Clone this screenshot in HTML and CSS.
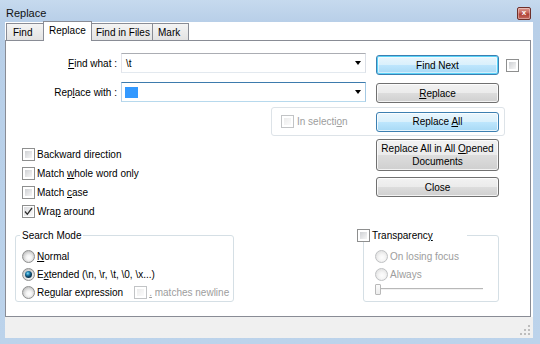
FILE: index.html
```html
<!DOCTYPE html>
<html>
<head>
<meta charset="utf-8">
<title>Replace</title>
<link rel="stylesheet" href="styles.css">
</head>
<body>
<div class="window">
  <div class="titlebar">
    <span class="title">Replace</span>
    <div class="close">x</div>
  </div>
  <div class="client">
    <div class="tabs">
      <div class="tab t-find">Find</div>
      <div class="tab active t-replace">Replace</div>
      <div class="tab t-files">Find in Files</div>
      <div class="tab t-mark">Mark</div>
    </div>
    <div class="panel">
      <div class="top">
        <div class="left">
          <div class="field">
            <label><u>F</u>ind what :</label>
            <div class="combo"><span class="val">\t</span><span class="arrow"></span></div>
          </div>
          <div class="field">
            <label>Rep<u>l</u>ace with :</label>
            <div class="combo focus"><span class="sel"></span><span class="arrow"></span></div>
          </div>
          <div class="checks">
            <div class="check"><span class="cb"></span><span>Backward direction</span></div>
            <div class="check"><span class="cb"></span><span>Match <u>w</u>hole word only</span></div>
            <div class="check"><span class="cb"></span><span>Match <u>c</u>ase</span></div>
            <div class="check"><span class="cb checked"><svg viewBox="0 0 9 9" width="9" height="9"><path d="M1 4.5 L3.3 7.3 L8 1" fill="none" stroke="#2b2b2b" stroke-width="1.3"/></svg></span><span>Wra<u>p</u> around</span></div>
          </div>
        </div>
        <div class="right">
          <div class="row1">
            <div class="btn blue default"><span>Find Next</span></div>
            <span class="cb small"></span>
          </div>
          <div class="btn b-replace"><span><u>R</u>eplace</span></div>
          <div class="insel">
            <div class="insel-label"><span class="cb disabled"></span><span class="dis">In selecti<u>o</u>n</span></div>
            <div class="btn blue"><span>Replace <u>A</u>ll</span></div>
          </div>
          <div class="btn tall"><span>Replace All in All <u>O</u>pened<br>Documents</span></div>
          <div class="btn b-close"><span>Close</span></div>
        </div>
      </div>
      <div class="bottom">
        <fieldset class="group search">
          <legend>Search Mode</legend>
          <div class="opt"><span class="rb"></span><span><u>N</u>ormal</span></div>
          <div class="opt"><span class="rb on"></span><span>E<u>x</u>tended (\n, \r, \t, \0, \x...)</span></div>
          <div class="opt clip"><span class="rb"></span><span>Re<u>g</u>ular expression</span><span class="cb disabled nl"></span><span class="dis"><u>.</u> matches newline</span></div>
        </fieldset>
        <fieldset class="group trans">
          <legend><span class="cb"></span><span>Transparenc<u>y</u></span></legend>
          <div class="opt"><span class="rb disabled"></span><span class="dis">On losing focus</span></div>
          <div class="opt"><span class="rb disabled"></span><span class="dis">Always</span></div>
          <div class="opt slider-row"><div class="slider"><span class="thumb"></span></div></div>
        </fieldset>
      </div>
    </div>
    <div class="footer">
      <svg class="grip" width="11" height="11" viewBox="0 0 11 11">
        <g fill="#bdbdbd">
          <rect x="8" y="0" width="2" height="2"/>
          <rect x="4" y="4" width="2" height="2"/><rect x="8" y="4" width="2" height="2"/>
          <rect x="0" y="8" width="2" height="2"/><rect x="4" y="8" width="2" height="2"/><rect x="8" y="8" width="2" height="2"/>
        </g>
      </svg>
    </div>
  </div>
</div>
</body>
</html>
```

FILE: styles.css
```css
* { box-sizing: border-box; }
html, body { margin: 0; padding: 0; }
body {
  width: 540px;
  height: 344px;
  overflow: hidden;
  font-family: "Liberation Sans", Arial, sans-serif;
  font-size: 10px;
  color: #000;
  background: #b9d1ea;
}
u { text-decoration: underline; text-underline-offset: 1px; }

.window {
  width: 540px;
  height: 344px;
  display: flex;
  flex-direction: column;
  background: linear-gradient(#c6daee, #b8cfe8 22px, #b9d1ea 60%, #bcd3eb);
}

.titlebar {
  height: 22px;
  display: flex;
  align-items: flex-start;
  justify-content: space-between;
  padding: 0 9px 0 6px;
}
.title {
  font-size: 11px;
  line-height: 13px;
  margin-top: 7px;
  color: #111;
}
.close {
  width: 14px;
  height: 13px;
  margin-top: 7px;
  border: 1px solid #6e2f2a;
  border-radius: 2px;
  background: linear-gradient(#dc9b92, #c5625a 45%, #ae3f35 55%, #c66a5f);
  box-shadow: inset 0 0 0 1px rgba(255,255,255,0.35);
  color: #fff;
  font-size: 8px;
  font-weight: bold;
  line-height: 10px;
  text-align: center;
}

.client {
  flex: 1;
  margin: 0 7px 6px 5px;
  background: #fff;
  display: flex;
  flex-direction: column;
}

.tabs {
  height: 18px;
  display: flex;
  align-items: flex-end;
  padding-left: 1px;
  position: relative;
  z-index: 1;
}
.tab {
  height: 17px;
  border: 1px solid #898c95;
  border-bottom: none;
  background: linear-gradient(#f4f4f4, #e3e3e3);
  padding-left: 5px;
  line-height: 17px;
  white-space: nowrap;
}
.tab.active {
  height: 20px;
  margin: 0 -1px -1px;
  background: #fff;
  padding-top: 0;
  line-height: 18px;
}
.t-find { width: 38px; padding-left: 6px; }
.t-replace { width: 49px; }
.t-files { width: 62px; padding-left: 4px; }
.t-mark { width: 37px; margin-left: -1px; }

.panel {
  height: 277px;
  margin-right: 2px;
  border: 1px solid #898c95;
  background: #fff;
  display: flex;
  flex-direction: column;
}

.top {
  display: flex;
  height: 180px;
}
.left {
  width: 360px;
  padding-top: 12px;
  display: flex;
  flex-direction: column;
}
.field {
  display: flex;
  align-items: center;
  height: 20px;
}
.field + .field { margin-top: 9px; }
.field label {
  width: 111px;
  margin-right: 4px;
  text-align: right;
  white-space: nowrap;
}
.combo {
  width: 245px;
  height: 20px;
  border: 1px solid;
  border-color: #abadb3 #dbdfe6 #e3e9ef #e2e3ea;
  display: flex;
  align-items: center;
  padding-left: 4px;
}
.combo.focus { border-color: #3d7bad #a4c9e3 #b7d9ed #b5cfe7; padding-left: 3px; }
.combo .arrow {
  margin-left: auto;
  margin-right: 4px;
  width: 0;
  height: 0;
  border-left: 3.5px solid transparent;
  border-right: 3.5px solid transparent;
  border-top: 4px solid #000;
}
.sel {
  width: 13px;
  height: 11px;
  background: #3399ff;
}

.checks {
  margin-top: 43px;
  padding-left: 16px;
}
.check {
  height: 19px;
  display: flex;
  align-items: center;
  gap: 2px;
  white-space: nowrap;
}

.cb {
  width: 13px;
  height: 13px;
  flex: none;
  display: inline-flex;
  align-items: center;
  justify-content: center;
  border: 1px solid #8e8f8f;
  padding: 2px;
  background: linear-gradient(135deg, #cfd1d4, #f6f6f6) content-box, #fff;
}
.cb.checked { padding: 1px; background: linear-gradient(135deg, #dcdde0, #fafafa) content-box, #fff; }
.cb.disabled {
  border-color: #c2c4c6;
  background: linear-gradient(135deg, #ececec, #fbfbfb) content-box, #fff;
}
.dis { color: #9d9d9d; }

.rb {
  width: 13px;
  height: 13px;
  flex: none;
  border-radius: 50%;
  border: 1px solid #8e8f8f;
  background: radial-gradient(circle at 55% 60%, #fdfdfd 0, #f4f4f4 2.5px, #d8d8d8 5px, #c9c9c9 6px);
  display: inline-flex;
  align-items: center;
  justify-content: center;
}
.rb.on::after {
  content: "";
  width: 7px;
  height: 7px;
  border-radius: 50%;
  background: radial-gradient(circle at 40% 35%, #8fe0f5 0, #2b8fbd 1.5px, #0f4f74 3px, #0b3550 4px);
}
.rb.disabled {
  border-color: #bfc1c3;
  background: radial-gradient(circle at 55% 60%, #fdfdfd 0, #f6f6f6 3px, #e6e6e6 6px);
}

.right {
  margin-left: 10px;
  padding-top: 14px;
  display: flex;
  flex-direction: column;
  width: 155px;
}
.btn {
  width: 123px;
  height: 20px;
  flex: none;
  border: 1px solid #707070;
  border-radius: 3px;
  background: linear-gradient(#f2f2f2, #ebebeb 50%, #dddddd 50%, #cfcfcf);
  box-shadow: inset 0 0 0 1px rgba(255,255,255,0.75);
  display: flex;
  align-items: center;
  justify-content: center;
  text-align: center;
  line-height: 13px;
  white-space: nowrap;
}
.btn.blue {
  border-color: #3c7fb1;
  background: linear-gradient(#eaf6fd, #d9f0fc 50%, #bee6fd 50%, #a7d9f5);
}
.btn.default {
  box-shadow: inset 0 0 0 1px #5ad3f8, inset 0 0 0 2px rgba(255,255,255,0.5);
}
.row1 {
  display: flex;
  align-items: flex-start;
  gap: 7px;
}
.row1 .cb { margin-top: 4px; }
.b-replace { margin-top: 8px; }

.insel {
  margin-top: 4px;
  margin-left: -105px;
  width: 234px;
  height: 29px;
  border: 1px solid #dde3e8;
  border-radius: 3px;
  display: flex;
  align-items: center;
  justify-content: space-between;
  padding: 0 5px 0 9px;
}
.insel-label {
  display: flex;
  align-items: center;
  gap: 3px;
  white-space: nowrap;
}
.btn.tall {
  margin-top: 3px;
  height: 32px;
  white-space: normal;
}
.b-close { margin-top: 6px; }

.bottom {
  display: flex;
  align-items: flex-start;
  margin-top: 8px;
  padding-left: 9px;
}
fieldset.group {
  margin: 0;
  min-width: 0;
  border: 1px solid #d5dfe5;
  border-radius: 3px;
  padding: 5px 0 0 6px;
}
fieldset.group legend {
  padding: 0 2px;
  margin-left: -2px;
  height: 13px;
  line-height: 13px;
  white-space: nowrap;
}
fieldset.search { width: 219px; }
fieldset.trans {
  width: 136px;
  margin-left: 129px;
  padding-left: 11px;
}
fieldset.trans legend {
  margin-left: -18px;
  width: 110px;
  padding: 0;
  display: flex;
  align-items: center;
  gap: 2px;
}
.opt {
  height: 18px;
  display: flex;
  align-items: center;
  gap: 2px;
  white-space: nowrap;
}
.opt.clip { overflow: hidden; }
.cb.nl { margin-left: 9px; }
.slider-row { align-items: flex-start; }
.slider {
  margin-top: 1px;
  width: 108px;
  height: 11px;
  background:
    linear-gradient(#b8b8b8, #b8b8b8) 0 4px / 100% 1px no-repeat,
    linear-gradient(#f2f2f2, #f2f2f2) 0 5px / 100% 1px no-repeat;
}
.thumb {
  display: block;
  width: 6px;
  height: 11px;
  border: 1px solid #b9b9b9;
  border-radius: 1px;
  background: linear-gradient(#fbfbfb, #ececec);
}

.footer {
  height: 21px;
  background: #f0f0f0;
  display: flex;
  justify-content: flex-end;
  align-items: flex-end;
}
.grip { margin: 0 2px 2px 0; }
```
